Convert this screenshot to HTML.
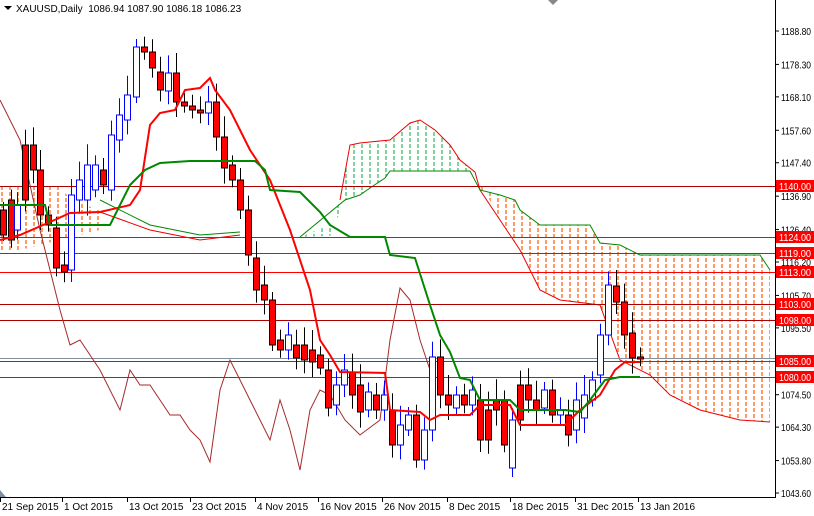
<!DOCTYPE html>
<html><head><meta charset="utf-8"><style>
body{margin:0;background:#fff;width:814px;height:516px;overflow:hidden}
svg{display:block;font-family:"Liberation Sans",sans-serif;font-size:10px}
</style></head><body>
<svg id="s" width="814" height="516" xmlns="http://www.w3.org/2000/svg">
<defs>
<pattern id="po" width="8" height="6" patternUnits="userSpaceOnUse"><line x1="2" y1="0" x2="2" y2="4" stroke="#ff5a00" stroke-width="1.2"/></pattern>
<pattern id="pg" width="8" height="6" patternUnits="userSpaceOnUse"><line x1="2" y1="0" x2="2" y2="4" stroke="#2eb85c" stroke-width="1.2"/></pattern>
</defs>
<rect width="814" height="516" fill="#fff"/>
<polygon fill="url(#po)" points="0,185 60,185 70,200 100,210 100,230 60,240 20,250 0,250"/>
<polygon fill="url(#pg)" points="300,237 330,225 340,200 350,145 360,143 390,140 410,123 420,120 435,130 450,145 460,160 475,172 450,171 390,171 385,178 370,188 360,195 345,200 330,236"/>
<polygon fill="url(#po)" points="475,172 480,190 500,195 515,200 520,210 540,225 590,225 600,243 620,245 640,255 760,255 770,270 770,422 740,420 700,410 670,395 650,375 620,360 600,305 560,300 540,290 520,250 500,220"/>
<polyline fill="none" stroke="#e00" stroke-width="1" points="340,200 350,145 360,143 390,140 410,123 420,120 435,130 450,145 460,160 475,172 480,190 500,220 520,250 540,290 560,300 600,305 620,360 650,375 670,395 700,410 740,420 770,422"/>
<polyline fill="none" stroke="#080" stroke-width="1" points="300,237 345,200 360,195 370,188 385,178 390,171 470,171 480,190 500,195 515,200 520,210 540,225 590,225 600,243 620,245 640,255 760,255 770,270"/>
<polyline fill="none" stroke="#e00" stroke-width="1" points="100,212 150,230 200,240 240,235"/>
<polyline fill="none" stroke="#080" stroke-width="1" points="100,200 150,225 200,235 240,232"/>
<g stroke="#f00" stroke-width="1">
<line x1="0" y1="186.5" x2="775" y2="186.5" stroke="#a00"/>
<line x1="0" y1="237.5" x2="775" y2="237.5"/>
<line x1="0" y1="253.5" x2="775" y2="253.5"/>
<line x1="0" y1="272.5" x2="775" y2="272.5"/>
<line x1="0" y1="304.5" x2="775" y2="304.5" stroke="#a00"/>
<line x1="0" y1="320.5" x2="775" y2="320.5" stroke="#a00"/>
<line x1="0" y1="358.5" x2="775" y2="358.5" stroke="#8090a0"/>
<line x1="0" y1="361.5" x2="775" y2="361.5"/>
<line x1="0" y1="377.5" x2="775" y2="377.5"/>
</g>
<polyline fill="none" stroke="#a52a2a" stroke-width="1" points="0,100 20,140 40,230 50,270 60,310 70,345 80,340 100,370 120,410 130,370 140,385 150,385 160,400 170,415 180,415 190,430 200,440 210,462 220,390 230,360 240,380 250,400 270,440 280,400 290,430 300,470 310,410 320,390 330,395 345,420 360,435 380,420 390,340 400,288 410,300 420,340 430,370"/>
<g id="c"></g>
<polyline fill="none" stroke="#f00" stroke-width="2" points="0,240 20,235 50,222 70,213 100,212 130,205 140,190 150,125 160,113 175,110 185,90 200,88 210,78 215,90 230,110 250,150 270,180 290,230 310,290 320,340 330,355 340,372 385,373 390,410 420,412 430,420 440,415 470,415 480,405 510,405 520,425 565,425 580,410 600,395 615,370 625,362 640,362"/>
<polyline fill="none" stroke="#080" stroke-width="2" points="0,205 45,205 50,225 110,225 130,185 145,170 160,163 190,161 255,161 265,170 270,190 300,192 320,212 330,225 350,237 385,237 390,255 415,258 430,305 440,335 450,352 460,378 470,380 480,400 510,400 520,410 565,410 580,412 590,400 605,380 620,377 640,377"/>
<line x1="775.5" y1="0" x2="775.5" y2="498" stroke="#000"/>
<line x1="0" y1="497.5" x2="776" y2="497.5" stroke="#000"/>
<polygon points="548,0 558,0 553,5" fill="#888"/>
<polygon points="0,490 0,497 6,497" fill="#8090a0"/>
<polygon points="4,6 12,6 8,10" fill="#000"/>
<text x="16" y="12" fill="#000">XAUUSD,Daily&#160;&#160;1086.94 1087.90 1086.18 1086.23</text>
<g id="ax" fill="#000"></g>
</svg>
<script>
var s=document.getElementById('c'),ns="http://www.w3.org/2000/svg";
function el(t,a,p){var e=document.createElementNS(ns,t);for(var k in a)e.setAttribute(k,a[k]);(p||s).appendChild(e);return e}
var d=[[3,210,235,'r'],[11,200,240,'r'],[17,205,230,'b'],[25,145,200,'r'],[33,145,170,'r'],[40,170,215,'r'],[48,215,225,'r'],[56,228,268,'r'],[64,265,272,'r'],[71,195,270,'b'],[79,180,200,'b'],[87,165,200,'b'],[95,165,190,'b'],[103,170,185,'r'],[111,135,190,'b'],[119,115,140,'b'],[127,95,120,'b'],[136,47,97,'b'],[144,47,52,'r'],[152,52,68,'r'],[160,72,90,'r'],[168,73,91,'b'],[176,73,102,'r'],[184,102,106,'r'],[192,106,110,'r'],[200,110,113,'r'],[208,102,113,'b'],[216,102,137,'r'],[224,137,168,'r'],[232,165,180,'r'],[240,180,210,'r'],[248,210,255,'r'],[256,258,290,'r'],[264,285,300,'r'],[272,300,345,'r'],[280,340,350,'r'],[288,335,350,'b'],[296,345,358,'r'],[304,345,360,'r'],[312,350,362,'r'],[320,355,368,'r'],[328,370,408,'r'],[336,385,405,'b'],[344,370,385,'b'],[352,372,395,'r'],[360,385,412,'r'],[368,392,410,'b'],[376,395,410,'r'],[384,395,410,'b'],[392,410,445,'r'],[400,425,445,'b'],[408,415,430,'b'],[416,415,460,'r'],[424,430,460,'b'],[432,357,430,'b'],[440,357,395,'r'],[448,395,405,'r'],[456,395,408,'b'],[464,395,405,'r'],[472,390,405,'b'],[480,400,440,'r'],[488,410,440,'r'],[496,400,410,'r'],[504,400,445,'r'],[512,420,468,'b'],[520,385,420,'r'],[528,385,400,'r'],[536,400,410,'r'],[544,390,408,'b'],[552,390,415,'r'],[560,410,415,'b'],[568,415,435,'r'],[576,400,430,'b'],[584,395,418,'b'],[592,380,400,'b'],[600,335,375,'b'],[608,285,335,'b'],[616,286,302,'r'],[624,302,335,'r'],[632,333,358,'r'],[640,357,359,'r']];
d.forEach(function(c,i){var x=c[0]+.5,col=c[3]=='b'?'#00f':'#000';var h=10+((i*37)%17);
el('line',{x1:x,x2:x,y1:c[1]-h*0.8,y2:c[2]+h*0.6,stroke:col});
el('rect',{x:x-3,y:c[1],width:6,height:Math.max(2,c[2]-c[1]),fill:c[3]=='b'?'#fff':'#f00',stroke:col});});
var a=document.getElementById('ax');
function Y(p){return 31+(1188.8-p)*3.182}
[1188.8,1178.3,1168.1,1157.6,1147.4,1136.9,1126.4,1116.2,1105.7,1095.5,1074.5,1064.3,1053.8,1043.6].forEach(function(p){var y=Y(p);el('line',{x1:775,x2:779,y1:y,y2:y,stroke:'#000'},a);el('text',{x:781,y:y+4,textLength:30,lengthAdjust:'spacingAndGlyphs'},a).textContent=p.toFixed(2)});
[1140,1124,1119,1113,1103,1098,1085,1080].forEach(function(p){var y=Math.round(Y(p));el('rect',{x:776,y:y-6,width:38,height:12,fill:'#f00'},a);var t=el('text',{x:779,y:y+4,fill:'#fff',textLength:32,lengthAdjust:'spacingAndGlyphs'},a);t.textContent=p.toFixed(2)});
var dt=[[0,'21 Sep 2015'],[62,'1 Oct 2015'],[127,'13 Oct 2015'],[190,'23 Oct 2015'],[255,'4 Nov 2015'],[318,'16 Nov 2015'],[382,'26 Nov 2015'],[447,'8 Dec 2015'],[510,'18 Dec 2015'],[575,'31 Dec 2015'],[638,'13 Jan 2016']];
dt.forEach(function(q){el('line',{x1:q[0]+.5,x2:q[0]+.5,y1:497,y2:502,stroke:'#000'},a);el('text',{x:q[0]+2,y:510},a).textContent=q[1]});
</script>
</body></html>
